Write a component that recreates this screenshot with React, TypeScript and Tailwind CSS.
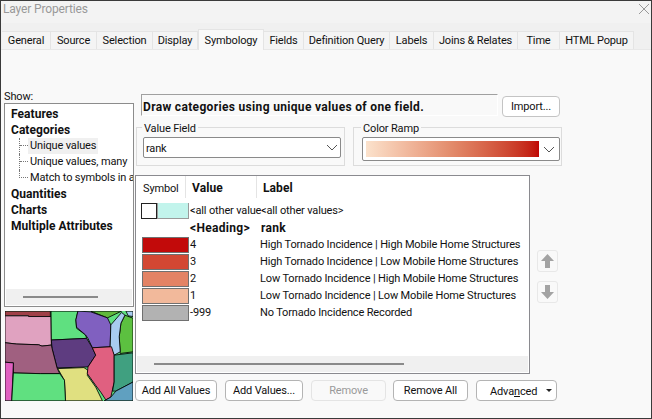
const tabs = [
  { name: "General", width: "w-[49px]" },
  { name: "Source", width: "w-[46px]" },
  { name: "Selection", width: "w-[56px]" },
  { name: "Display", width: "w-[45px]" },
  { name: "Symbology", width: "w-[66px]", active: true },
  { name: "Fields", width: "w-[40px]" },
  { name: "Definition Query", width: "w-[86px]" },
  { name: "Labels", width: "w-[44px]" },
  { name: "Joins & Relates", width: "w-[84px]" },
  { name: "Time", width: "w-[42px]" },
  { name: "HTML Popup", width: "w-[74px]" },
];

const rows = [
  { color: "bg-[#c20a0a]", value: "4", label: "High Tornado Incidence | High Mobile Home Structures" },
  { color: "bg-[#d34733]", value: "3", label: "High Tornado Incidence | Low Mobile Home Structures" },
  { color: "bg-[#e38365]", value: "2", label: "Low Tornado Incidence | High Mobile Home Structures" },
  { color: "bg-[#f2b99b]", value: "1", label: "Low Tornado Incidence | Low Mobile Home Structures" },
  { color: "bg-[#b2b2b2]", value: "-999", label: "No Tornado Incidence Recorded" },
];

const regions = [
  { fill: "#a04048", points: "15,24 150,24 150,40 85,40 85,38 15,38" },
  { fill: "#e0a2c0", points: "15,38 85,38 85,40 152,40 153,125 125,128 115,124 50,122 15,118" },
  { fill: "#5fe080", points: "152,24 232,24 226,50 228,75 255,95 258,105 153,110" },
  { fill: "#60b83c", points: "270,24 362,24 345,32 320,44" },
  { fill: "#8060c0", points: "232,24 270,26 320,44 330,65 328,130 275,133 262,105 255,95 228,72 226,50" },
  { fill: "#5cc040", points: "372,36 396,45 396,145 358,150 355,100 360,60" },
  { fill: "#a8ccf0", points: "362,28 372,36 360,60 355,100 358,145 340,155 328,130 330,65" },
  { fill: "#a8ccf0", points: "375,24 396,24 396,40 382,38" },
  { fill: "#5e3c80", points: "153,110 258,105 275,133 285,155 262,190 170,193 155,135" },
  { fill: "#a06080", points: "15,118 50,122 115,124 125,128 153,125 155,135 170,193 178,210 120,210 40,208 40,178 15,176" },
  { fill: "#e0e080", points: "172,195 250,192 262,200 260,215 285,250 305,291 195,291 192,230" },
  { fill: "#e06080", points: "275,133 332,130 340,155 340,235 330,280 315,288 300,265 285,245 260,210 262,190 285,155" },
  { fill: "#40a080", points: "340,155 396,148 396,235 345,262 335,262 340,235" },
  { fill: "#60a0c0", points: "396,235 396,291 310,291 330,280 345,262" },
  { fill: "#e060c0", points: "15,176 40,178 35,291 15,291" },
  { fill: "#60e080", points: "40,208 120,210 178,210 192,230 195,291 35,291" },
];

const Chevron = () => (
  <svg width="12" height="7" viewBox="0 0 12 7" fill="none" stroke="#555" strokeWidth="1">
    <path d="M1 1l5 5 5-5" />
  </svg>
);

const ActionButton = ({ label, width, disabled }: { label: string; width: string; disabled?: boolean }) => (
  <button
    className={`${width} h-[21px] rounded-[4px] border pt-[2px] ${
      disabled ? "border-[#e4e4e4] bg-[#f9f9f9] text-[#999]" : "border-[#b4b4b4] bg-white text-[#111]"
    }`}
  >
    {label}
  </button>
);

const TreeChild = ({ label, active, last }: { label: string; active?: boolean; last?: boolean }) => (
  <div className="flex h-4 items-center pl-[14px] whitespace-nowrap">
    <div className={`h-4 w-[9px] shrink-0 ${last ? "" : "border-l border-dotted border-[#777]"}`}>
      <div className={`h-2 border-b border-dotted border-[#777] ${last ? "border-l" : ""}`} />
    </div>
    <span className={`px-[2px] leading-4 ${active ? "bg-[#f0f0f0]" : ""}`}>{label}</span>
  </div>
);

const TreeHeading = ({ label }: { label: string }) => (
  <div className="h-4 pl-[6px] text-[12px] font-bold leading-4 tracking-[0.05px]">{label}</div>
);

export default function App() {
  return (
    <div className="flex h-[419px] w-[652px] flex-col overflow-hidden border border-[#3a3a3a] bg-[#f9f9f9] text-[11px] tracking-[-0.15px] text-[#111] [font-family:Roboto,sans-serif]">
      <div className="flex h-[22px] shrink-0 justify-between bg-[#f3f3f3] pl-[2px] pr-[2px] pt-[1px] text-[12px] leading-[14px] text-[#999]">
        <span>Layer Properties</span>
        <svg width="10" height="10" viewBox="0 0 10 10" stroke="#999" strokeWidth="1" className="mt-[2px]">
          <path d="M0 0l10 10M10 0L0 10" />
        </svg>
      </div>

      <div className="flex h-[27px] shrink-0 items-end border-b border-[#e8e8e8] bg-[#f0f0f0] pl-[1px]">
        {tabs.map((tab) =>
          tab.active ? (
            <div
              key={tab.name}
              className={`${tab.width} -mb-px flex h-[21px] items-start justify-center border border-b-0 border-[#e4e4e4] bg-[#f9f9f9] pt-[3px]`}
            >
              {tab.name}
            </div>
          ) : (
            <div
              key={tab.name}
              className={`${tab.width} flex h-[18px] items-center justify-center border-r border-t border-[#e4e4e4] bg-[#f4f4f4] pt-[2px] whitespace-nowrap`}
            >
              {tab.name}
            </div>
          ),
        )}
      </div>

      <div className="flex flex-1 pl-[3px]">
        <div className="w-[130px] shrink-0 pt-[39px]">
          <div className="h-[14px] leading-4">Show:</div>
          <div className="flex h-[204px] w-[130px] flex-col overflow-hidden border border-[#8c8c8c] bg-white">
            <div className="flex-1 pt-[2px]">
              <TreeHeading label="Features" />
              <TreeHeading label="Categories" />
              <TreeChild label="Unique values" active />
              <TreeChild label="Unique values, many" />
              <TreeChild label="Match to symbols in a" last />
              <TreeHeading label="Quantities" />
              <TreeHeading label="Charts" />
              <TreeHeading label="Multiple Attributes" />
            </div>
            <div className="mx-[1px] mb-[1px] flex h-4 items-center bg-[#f0f0f0] pl-[17px]">
              <div className="h-[2px] w-[75px] bg-[#8a8a8a]" />
            </div>
          </div>
          <svg width="128" height="90" viewBox="15 24 381 267" className="mt-[4px] ml-[1px] block bg-[#60e080]">
            {regions.map((region) => (
              <polygon
                key={region.points}
                points={region.points}
                fill={region.fill}
                stroke="#000"
                strokeWidth="2.5"
                strokeLinejoin="round"
              />
            ))}
          </svg>
        </div>

        <div className="ml-[1px] flex-1 pt-[44px]">
          <div className="flex">
            <div className="ml-[6px] flex h-[22px] w-[357px] items-center border border-b-white border-l-[#a0a0a0] border-r-white border-t-[#a0a0a0] pl-[1px] pt-[3px] text-[12px] font-bold tracking-[0.33px] whitespace-nowrap">
              Draw categories using unique values of one field.
            </div>
            <button className="ml-[4px] mt-[2px] h-[21px] w-[58px] rounded-[4px] border border-[#c4c4c4] bg-white pt-[2px]">
              Import...
            </button>
          </div>

          <div className="mt-[2px] flex">
            <fieldset className="ml-[1px] h-[47px] w-[209px] border border-[#dcdcdc] pl-[6px] pr-[3px]">
              <legend className="-ml-[1px] h-4 px-[2px] leading-[19px]">Value Field</legend>
              <div className="mt-[2px] flex h-[21px] w-[198px] items-center justify-between rounded-[2px] border border-[#8a8a8a] bg-white pl-[2px] pr-[2px]">
                <span className="pt-[3px]">rank</span>
                <Chevron />
              </div>
            </fieldset>
            <fieldset className="ml-[8px] h-[47px] w-[209px] border border-[#dcdcdc] pl-[8px] pr-[1px]">
              <legend className="-ml-[1px] h-4 px-[2px] leading-[19px]">Color Ramp</legend>
              <div className="mt-[2px] flex h-[24px] w-[198px] items-center justify-between rounded-[2px] border border-[#8a8a8a] bg-white pl-[3px] pr-[4px]">
                <div className="h-4 w-[173px] bg-gradient-to-r from-[#fbe2cc] via-[#e28a6a] to-[#c00404]" />
                <Chevron />
              </div>
            </fieldset>
          </div>

          <div className="mt-[9px] flex">
            <div className="flex h-[199px] w-[395px] flex-col border border-[#8a8a8f] bg-white">
              <div className="flex h-[22px] items-center">
                <div className="h-[22px] w-[50px] border-r border-[#e4e4e4] pl-[7px] pt-[2px] leading-[22px]">Symbol</div>
                <div className="h-[22px] w-[71px] border-r border-[#e4e4e4] pl-[6px] pt-[2px] text-[12px] font-bold leading-[20px] tracking-[0.1px]">Value</div>
                <div className="h-[22px] pl-[6px] pt-[2px] text-[12px] font-bold leading-[20px] tracking-[0.1px]">Label</div>
              </div>
              <div className="flex-1 pt-[4px]">
                <div className="flex h-[17px] items-center whitespace-nowrap">
                  <div className="ml-[5px] h-4 w-[16px] shrink-0 border border-[#222] bg-white" />
                  <div className="h-4 w-[32px] shrink-0 border border-t-0 border-[#9a9a9a] bg-[#c2f4ec]" />
                  <div className="ml-[1px] w-[71px] shrink-0 overflow-hidden pt-[2px]">&lt;all other values&gt;</div>
                  <div className="pt-[2px]">&lt;all other values&gt;</div>
                </div>
                <div className="flex h-[17px] items-center text-[12px] font-bold tracking-[0.3px]">
                  <div className="ml-[54px] w-[71px] shrink-0">&lt;Heading&gt;</div>
                  <div>rank</div>
                </div>
                {rows.map((row) => (
                  <div key={row.value} className="flex h-[17px] items-center whitespace-nowrap">
                    <div className={`${row.color} ml-[6px] h-4 w-[47px] shrink-0 border border-[#707070]`} />
                    <div className="w-[71px] shrink-0 pl-[1px] pt-[2px]">{row.value}</div>
                    <div className="pt-[2px]">{row.label}</div>
                  </div>
                ))}
              </div>
              <div className="mx-[1px] mb-[1px] flex h-4 items-center bg-[#f0f0f0] pl-[17px]">
                <div className="h-[2px] w-[250px] bg-[#8a8a8a]" />
              </div>
            </div>

            <div className="ml-[7px] pt-[75px]">
              <div className="flex h-[22px] w-[21px] items-center justify-center rounded-[3px] border border-[#e8e8e8]">
                <svg width="13" height="14" viewBox="0 0 13 14" fill="#a3a3a3">
                  <path d="M6.5 0l6.5 7H9v7H4V7H0z" />
                </svg>
              </div>
              <div className="mt-[9px] flex h-[22px] w-[21px] items-center justify-center rounded-[3px] border border-[#e8e8e8]">
                <svg width="13" height="14" viewBox="0 0 13 14" fill="#a3a3a3">
                  <path d="M6.5 14L0 7h4V0h5v7h4z" />
                </svg>
              </div>
            </div>
          </div>

          <div className="mt-[6px] flex">
            <ActionButton label="Add All Values" width="w-[82px]" />
            <ActionButton label="Add Values..." width="ml-[8px] w-[78px]" />
            <ActionButton label="Remove" width="ml-[8px] w-[75px]" disabled />
            <ActionButton label="Remove All" width="ml-[7px] w-[75px]" />
            <button className="ml-[8px] flex h-[21px] w-[81px] items-center rounded-[4px] border border-[#b4b4b4] bg-white pl-[13px]">
              <span className="pt-[3px]">
                Adva<span className="underline">n</span>ced
              </span>
              <svg width="6" height="3" viewBox="0 0 6 3" fill="#222" className="ml-[9px]">
                <path d="M0 0h6L3 3z" />
              </svg>
            </button>
          </div>
        </div>
      </div>
    </div>
  );
}
